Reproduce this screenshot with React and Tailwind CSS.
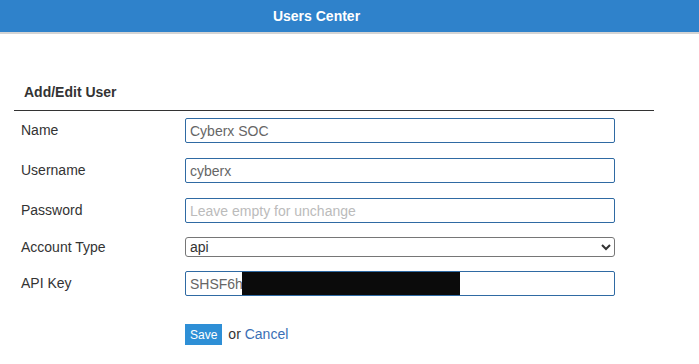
import React from 'react';

const rows = [
    { label: 'Name', value: 'Cyberx SOC' },
    { label: 'Username', value: 'cyberx' },
    { label: 'Password', placeholder: 'Leave empty for unchange', type: 'password' },
];

const App = () => {
    return (
        <div className="min-h-screen bg-white font-['Liberation_Sans',Arial,sans-serif] text-[#333]">
            {/* Header */}
            <div className="h-[34px] bg-[#2f82cb] border-b-2 border-[#d4d4d4] flex items-center justify-center pr-[66px]">
                <span className="text-white font-bold text-[14px]">Users Center</span>
            </div>

            {/* Form */}
            <div className="ml-[14px] w-[640px] pt-[48px]">
                <h3 className="pl-[10px] text-[14px] font-bold leading-[20px] pb-[8px] border-b border-[#333]">
                    Add/Edit User
                </h3>

                <div className="pt-[7px] flex flex-col gap-[15px]">
                    {rows.map((row) => (
                        <div key={row.label} className="flex items-center h-[25px]">
                            <label className="w-[171px] pl-[7px] text-[14px]">{row.label}</label>
                            <input
                                type={row.type || 'text'}
                                defaultValue={row.value}
                                placeholder={row.placeholder}
                                className="w-[430px] h-[25px] px-[4px] border border-[#2f6aa3] rounded-[2px] text-[14px] text-[#666] placeholder:text-[#bbb] outline-none"
                            />
                        </div>
                    ))}

                    <div className="flex items-center h-[20px] -mt-[1px]">
                        <label className="w-[171px] pl-[7px] text-[14px]">Account Type</label>
                        <select
                            defaultValue="api"
                            className="w-[430px] h-[20px] border border-[#767676] rounded-[3px] text-[14px] text-[#333] bg-white"
                        >
                            <option value="api">api</option>
                            <option value="user">user</option>
                            <option value="admin">admin</option>
                        </select>
                    </div>

                    <div className="flex items-center h-[25px] -mt-[1px]">
                        <label className="w-[171px] pl-[7px] text-[14px]">API Key</label>
                        <div className="relative">
                            <input
                                type="text"
                                defaultValue="SHSF6h"
                                className="w-[430px] h-[25px] px-[4px] border border-[#2f6aa3] rounded-[2px] text-[14px] text-[#666] outline-none"
                            />
                            {/* redaction */}
                            <div className="absolute left-[57px] top-[1px] w-[218px] h-[23px] bg-[#0b0b0b]" />
                        </div>
                    </div>
                </div>

                <div className="mt-[28px] ml-[171px] flex items-center gap-[6px]">
                    <button className="h-[21px] px-[5px] bg-[#2e8fd6] text-white text-[12px]">Save</button>
                    <span className="text-[14px]">
                        or <a href="#" className="text-[#3a6fb5]">Cancel</a>
                    </span>
                </div>
            </div>
        </div>
    );
};

export default App;
